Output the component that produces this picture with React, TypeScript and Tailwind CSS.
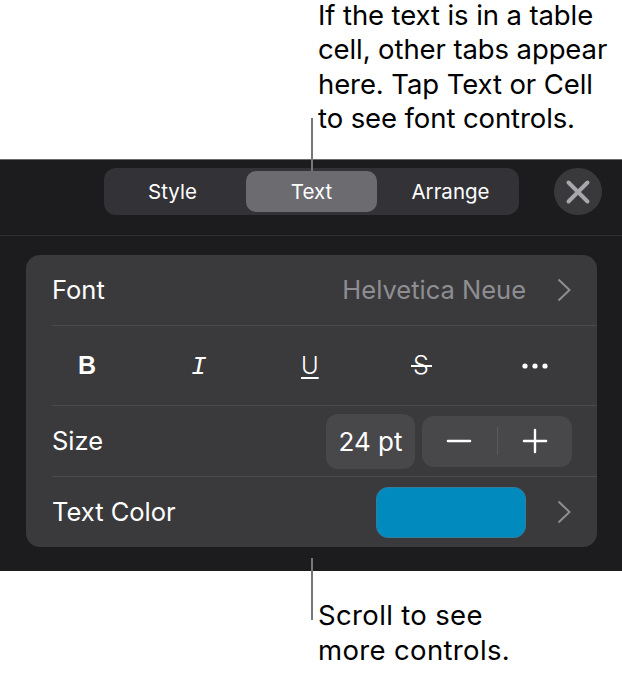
import { Minus, Plus, X } from "lucide-react";

const font = "font-['Inter',sans-serif]";

const Chevron = () => (
  <svg width="14" height="24" viewBox="0 0 14 24" fill="none" className="text-[#8e8e92]">
    <path d="M1.5 1.5 L12.5 12 L1.5 22.5" stroke="currentColor" strokeWidth="2" />
  </svg>
);

const Dots = () => (
  <svg width="26" height="6" viewBox="0 0 26 6" className="text-white">
    <circle cx="3" cy="3" r="2.6" fill="currentColor" />
    <circle cx="13" cy="3" r="2.6" fill="currentColor" />
    <circle cx="23" cy="3" r="2.6" fill="currentColor" />
  </svg>
);

const Callout = ({ lines, className, lineClass = "" }: { lines: string[]; className: string; lineClass?: string }) => (
  <div className={`text-[27.5px] leading-[34.5px] text-black pl-[318px] ${className}`}>
    {lines.map((l) => (
      <div key={l} className={lineClass}>{l}</div>
    ))}
  </div>
);

export default function App() {
  return (
    <div className={`w-[622px] h-[676px] bg-white relative flex flex-col overflow-hidden ${font}`}>
      <div className="h-[159px]">
        <Callout className="tracking-[-0.1px]" lineClass="first:leading-[30px] first:mb-[2px]" lines={["If the text is in a table", "cell, other tabs appear", "here. Tap Text or Cell", "to see font controls."]} />
      </div>

      <div className="h-[412px] bg-[#1c1c1e] border-t border-[#6a6a6c] flex flex-col">
        <div className="h-[76px] border-b border-[#2f2f31] flex items-start pt-[8px] pl-[104px]">
          <div className="w-[415px] h-[47px] rounded-[12px] bg-[#323237] flex items-center pl-[3px] text-[20.5px] text-white">
            <div className="w-[131px] text-center pt-[2px]">Style</div>
            <div className="ml-[8px] w-[131px] h-[41px] rounded-[10px] bg-[#6b6b70] flex items-center justify-center pt-[2px]">Text</div>
            <div className="w-[142px] pl-[5px] text-center pt-[2px]">Arrange</div>
          </div>
          <div className="ml-[35px] w-[48px] h-[47px] rounded-full bg-[#39393c] flex items-center justify-center">
            <X className="w-[38px] h-[38px] text-[#a8a8ac]" strokeWidth={2.5} />
          </div>
        </div>

        <div className="ml-[26px] mt-[19px] w-[571px] h-[292px] rounded-[14px] bg-[#3a3a3c] pl-[26px] text-white">
          <div className="h-[71px] border-b border-[#4b4b4d] flex items-center text-[25.5px]">
            <span>Font</span>
            <span className="ml-auto text-[#8e8e92]">Helvetica Neue</span>
            <span className="ml-[31px] mr-[26px] flex"><Chevron /></span>
          </div>

          <div className="h-[80px] border-b border-[#4b4b4d] flex items-center">
            <span className="w-[139px] pl-[26px] font-['Liberation_Sans',sans-serif] font-bold text-[25px]">B</span>
            <span className="w-[110px] pt-[4px] font-['Liberation_Mono',monospace] italic text-[26px]">I</span>
            <span className="w-[110px] text-[24px] underline underline-offset-[3px] decoration-2 font-light">U</span>
            <span className="w-[111px] pl-[2px] relative text-[25px] font-light">
              S
              <span className="absolute left-0 top-[18px] w-[21px] h-[2px] bg-white" />
            </span>
            <Dots />
          </div>

          <div className="h-[71px] border-b border-[#4b4b4d] flex items-center text-[26px]">
            <span className="text-[25.5px]">Size</span>
            <div className="ml-auto w-[89px] h-[55px] rounded-[12px] bg-[#48484a] flex items-center justify-center">24 pt</div>
            <div className="ml-[7px] mr-[25px] w-[150px] h-[51px] rounded-[12px] bg-[#48484a] flex items-center">
              <div className="flex-1 flex justify-center"><Minus className="w-[38px] h-[38px]" strokeWidth={1.5} /></div>
              <div className="w-px h-[28px] bg-[#5a5a5c]" />
              <div className="flex-1 flex justify-center"><Plus className="w-[38px] h-[38px]" strokeWidth={1.5} /></div>
            </div>
          </div>

          <div className="h-[70px] flex items-center text-[25.5px]">
            <span>Text Color</span>
            <div className="ml-auto w-[150px] h-[51px] rounded-[12px] bg-[#008abd] border border-[#2f7f9e]" />
            <span className="ml-[31px] mr-[26px] flex"><Chevron /></span>
          </div>
        </div>
      </div>

      <Callout className="pt-[27px] tracking-[0.35px]" lines={["Scroll to see", "more controls."]} />

      <div className="absolute left-[311px] top-[118px] w-[2px] h-[53px] bg-[#77777a]" />
      <div className="absolute left-[311px] top-[558px] w-[2px] h-[62px] bg-[#77777a]" />
    </div>
  );
}
